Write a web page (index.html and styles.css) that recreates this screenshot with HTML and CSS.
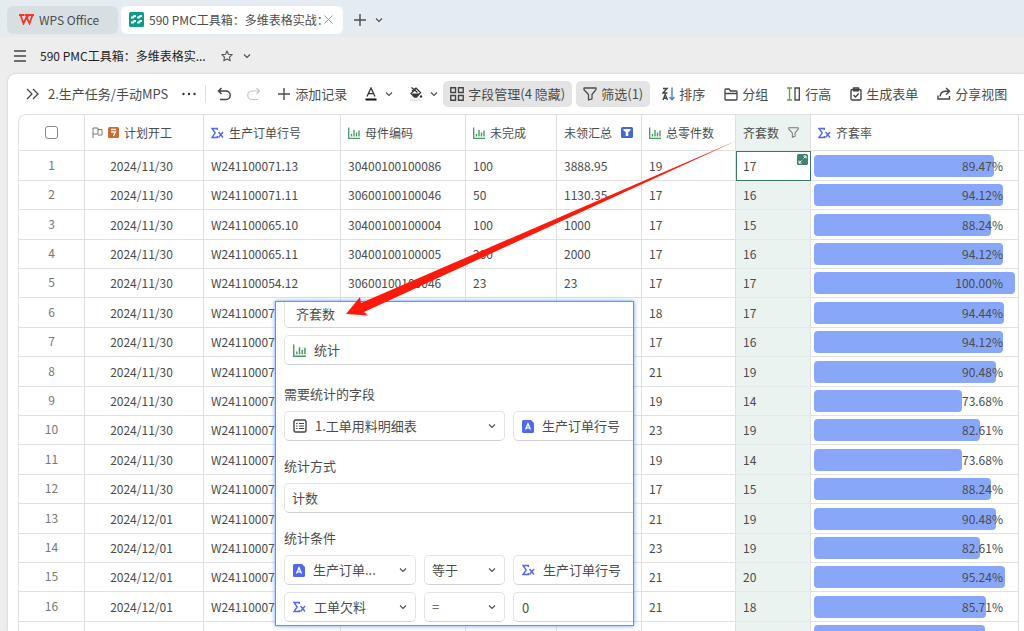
FILE: index.html
```html
<!DOCTYPE html>
<html lang="zh-CN">
<head>
    <meta charset="UTF-8">
    <meta name="viewport" content="width=device-width, initial-scale=1.0">
    <title>590 PMC工具箱：多维表格实战</title>
    <link rel="stylesheet" href="styles.css">
</head>
<body>
    <svg class="sprite" aria-hidden="true">
        <symbol id="i-down" viewBox="0 0 8 8"><path d="M1 2.5l3 3 3-3" fill="none" stroke="currentColor" stroke-width="1.1"/></symbol>
        <symbol id="i-chart" viewBox="0 0 12 12"><path d="M.7 .5v10.8H12" fill="none" stroke="#4b9866" stroke-width="1.3"/><path d="M3.500 7v2.500M6 3v6.500M8.500 5.500v4M11 3.500v6" fill="none" stroke="#4b9866" stroke-width="1.400"/></symbol>
        <symbol id="i-sigma" viewBox="0 0 13 12"><path d="M6.300 3V1.500H1L4.200 6 1 10.500h5.300V9M7.500 5l4.500 5.500M12 5L7.500 10.500" fill="none" stroke="#5268ee" stroke-width="1.400"/></symbol>
        <symbol id="i-text" viewBox="0 0 12 13"><path d="M2 0h7l3 3v8.500a1.500 1.500 0 0 1-1.500 1.500h-9A1.500 1.500 0 0 1 0 11.500v-10A1.500 1.500 0 0 1 1.500 0z" fill="#4f68ee"/><path d="M3.500 9.500L6 3.700l2.500 5.800M4.500 7.800h3" fill="none" stroke="#fff" stroke-width="1.300"/></symbol>
        <symbol id="i-funnel" viewBox="0 0 14 14"><path d="M1 1h12v1.700L9 7.500v4.300L5.500 13V7.500L1 2.700z" fill="none" stroke="currentColor" stroke-width="1.300" stroke-linejoin="round"/></symbol>
        <symbol id="i-plus" viewBox="0 0 14 14"><path d="M7 1v12M1 7h12" stroke="currentColor" stroke-width="1.400"/></symbol>
    </svg>

    <header class="tabs">
        <button class="tab home">
            <svg width="15" height="11" viewBox="0 0 15 11"><path d="M0 1h5.500M1.500 1l3 8.500L7.500 3l3 6.500 3-8.500M6 1h3.500L7.500 4.500M9.500 1H15" fill="none" stroke="#f0392b" stroke-width="1.800"/></svg>
            WPS Office
        </button>
        <button class="tab active">
            <svg width="15" height="15" viewBox="0 0 15 15"><rect width="15" height="15" rx="1.500" fill="#119b87"/><path d="M2 5.500h2l1.200-1.500H7M8 5.500h2L11.200 4H13M2 10.500h2L5.200 9H7M8 10.500h2L11.200 9H13" fill="none" stroke="#fff" stroke-width="1.900"/></svg>
            <span class="tab-name">590 PMC工具箱：多维表格实战：</span>
            <svg width="9" height="9" viewBox="0 0 9 9"><path d="M.5.5l8 8M8.500.5l-8 8" stroke="#999" stroke-width="1"/></svg>
        </button>
        <button class="icon-btn" aria-label="新建"><svg width="14" height="14"><use href="#i-plus"/></svg></button>
        <button class="icon-btn more" aria-label="更多"><svg width="8" height="8"><use href="#i-down"/></svg></button>
    </header>

    <div class="title-bar">
        <button class="icon-btn" aria-label="菜单"><svg width="12" height="12" viewBox="0 0 12 12"><path d="M0 1h12M0 6h12M0 11h12" stroke="#444" stroke-width="1.300"/></svg></button>
        <h1>590 PMC工具箱：多维表格实...</h1>
        <button class="icon-btn" aria-label="收藏"><svg width="12" height="12" viewBox="0 0 12 12"><path d="M6 .9l1.500 3.300 3.700.4-2.700 2.500.7 3.700L6 9l-3.200 1.800.7-3.700L.8 4.600l3.700-.4z" fill="none" stroke="#555" stroke-width="1.100" stroke-linejoin="round"/></svg></button>
        <button class="icon-btn" aria-label="展开"><svg width="8" height="8"><use href="#i-down"/></svg></button>
    </div>

    <main class="sheet">
        <div class="toolbar">
            <div class="view-name">
                <svg width="14" height="12" viewBox="0 0 14 12"><path d="M1 1l5 5-5 5M7 1l5 5-5 5" fill="none" stroke="#444" stroke-width="1.300"/></svg>
                <span>2.生产任务/手动MPS</span>
                <svg class="dots" width="14" height="4" viewBox="0 0 14 4"><circle cx="1.500" cy="2" r="1.200"/><circle cx="7" cy="2" r="1.200"/><circle cx="12.500" cy="2" r="1.200"/></svg>
            </div>
            <div class="tools">
                <button aria-label="撤销"><svg width="14" height="14" viewBox="0 0 14 14"><path d="M4.500 1L1.500 4l3 3M1.500 4H9a4 4 0 0 1 0 8.500H3" fill="none" stroke="#444" stroke-width="1.500"/></svg></button>
                <button aria-label="重做"><svg width="14" height="14" viewBox="0 0 14 14"><path d="M9.500 1l3 3-3 3M12.500 4H5a4 4 0 0 0 0 8.500h6" fill="none" stroke="#c4c4c4" stroke-width="1.200"/></svg></button>
                <button><svg width="14" height="14"><use href="#i-plus"/></svg>添加记录</button>
                <button class="font" aria-label="字体颜色"><svg width="12" height="14" viewBox="0 0 12 14"><path d="M2 9.500L6 1l4 8.500M3.400 6.700h5.200" fill="none" stroke="#333" stroke-width="1.300"/><path d="M.5 12.500h11" stroke="#111" stroke-width="2"/></svg><svg width="8" height="8"><use href="#i-down"/></svg></button>
                <button class="fill" aria-label="填充颜色"><svg width="14" height="14" viewBox="0 0 14 14"><path d="M2.500 .5l6 5M3 4l4-3 4.500 4.500-4 4.500H5.500L2 6.500l5-5" fill="none" stroke="#333" stroke-width="1.300"/><path d="M3 6.500h7.500L7 10H5.500z" fill="#333"/><circle cx="12" cy="9.500" r="1.200" fill="#333"/><path d="M1 13h11" stroke="#ddd" stroke-width="1.500"/></svg><svg width="8" height="8"><use href="#i-down"/></svg></button>
                <button class="on"><svg width="14" height="14" viewBox="0 0 14 14"><path d="M.8.800h4.700v4.700H.8zM8.500.800h4.700v4.700H8.500zM.8 8.500h4.700v4.700H.8zM8.500 8.500h4.700v4.700H8.500z" fill="none" stroke="#444" stroke-width="1.400"/></svg>字段管理(4 隐藏)</button>
                <button class="on"><svg width="14" height="14"><use href="#i-funnel"/></svg>筛选(1)</button>
                <button class="act"><svg width="13" height="14" viewBox="0 0 13 14"><path d="M1 1.500h4L1 6h4.500M1 13l2.200-5.500L5.500 13M1.800 11.300h3" fill="none" stroke="#444" stroke-width="1.400"/><path d="M10 .5v12M7.500 10l2.500 2.700 2.500-2.700" fill="none" stroke="#4e77e8" stroke-width="1.400"/></svg>排序</button>
                <button class="act"><svg width="14" height="13" viewBox="0 0 14 13"><path d="M1 11V1.800Q1 1 1.800 1H5l1.500 2h5.700q.8 0 .8.800V11q0 1-.8 1H1.800Q1 12 1 11zM1 5.500h12" fill="none" stroke="#444" stroke-width="1.300"/></svg>分组</button>
                <button class="act"><svg width="14" height="14" viewBox="0 0 14 14"><path d="M0 1h5M0 13h5M2.500 1v12" stroke="#5ba03c" stroke-width="1.300"/><path d="M8 1h4.300v12H8z" fill="none" stroke="#444" stroke-width="1.300"/></svg>行高</button>
                <button class="act"><svg width="12" height="14" viewBox="0 0 12 14"><rect x="1" y="2.500" width="10" height="10.500" rx="1.200" fill="none" stroke="#444" stroke-width="1.400"/><path d="M3.500 1h5v2.700h-5zM3.500 8l2 2 3.200-3.400" fill="none" stroke="#444" stroke-width="1.400"/></svg>生成表单</button>
                <button class="act"><svg width="14" height="14" viewBox="0 0 14 14"><path d="M9 1l3.500 3.200L9 7.500M12.500 4.200H8q-4.500.3-5 5.300M1 8.500V12h11.500V9" fill="none" stroke="#444" stroke-width="1.400"/></svg>分享视图</button>
            </div>
        </div>

        <div class="grid-wrap">
            <table class="grid">
                <colgroup>
                    <col class="c-no"><col class="c-date"><col class="c-order"><col class="c-code"><col class="c-todo">
                    <col class="c-sum"><col class="c-parts"><col class="c-kits"><col class="c-rate"><col>
                </colgroup>
                <thead>
                    <tr>
                        <th class="no"><input type="checkbox" aria-label="全选"></th>
                        <th><span class="head"><svg width="11" height="11" viewBox="0 0 11 11"><path d="M1 11V1h5v6H1M6 2.500h4v5.500H6" fill="none" stroke="#777"/></svg><svg width="11" height="11" viewBox="0 0 11 11"><rect width="11" height="11" rx="1.500" fill="#cc6a32"/><path d="M3 2.500h5M3 5h4.500L5.500 9" fill="none" stroke="#fff" stroke-width="1.300"/></svg>计划开工</span></th>
                        <th><span class="head"><svg width="13" height="12"><use href="#i-sigma"/></svg>生产订单行号</span></th>
                        <th><span class="head"><svg width="12" height="12"><use href="#i-chart"/></svg>母件编码</span></th>
                        <th><span class="head"><svg width="12" height="12"><use href="#i-chart"/></svg>未完成</span></th>
                        <th><span class="head wide">未领汇总<svg width="12" height="11" viewBox="0 0 12 11"><rect width="12" height="11" rx="1.500" fill="#4468cc"/><path d="M2.500 2h7v1.500L7.300 5v4H4.700V5L2.500 3.500z" fill="#fff"/></svg></span></th>
                        <th><span class="head"><svg width="12" height="12"><use href="#i-chart"/></svg>总零件数</span></th>
                        <th class="kits"><span class="head wide">齐套数<svg width="11" height="11"><use href="#i-funnel"/></svg></span></th>
                        <th><span class="head"><svg width="13" height="12"><use href="#i-sigma"/></svg>齐套率</span></th>
                        <th class="rest"></th>
                    </tr>
                </thead>
                <tbody id="rows"></tbody>
            </table>
        </div>
    </main>

    <section class="popup">
        <form class="fields">
            <input class="box name" type="text" value="齐套数" aria-label="字段名">
            <button type="button" class="box kind"><svg width="13" height="13"><use href="#i-chart"/></svg>统计</button>

            <h2>需要统计的字段</h2>
            <div class="line">
                <button type="button" class="box table-pick"><svg width="14" height="14" viewBox="0 0 14 14"><rect x="1" y="1" width="12" height="12" rx="1.500" fill="none" stroke="#444" stroke-width="1.400"/><path d="M3 4.500h1.500M6 4.500h5M3 7h1.500M6 7h5M3 9.500h1.500M6 9.500h5" stroke="#444" stroke-width="1.200"/></svg>1.工单用料明细表<svg class="arrow-down" width="8" height="8"><use href="#i-down"/></svg></button>
                <button type="button" class="box value"><svg width="12" height="13"><use href="#i-text"/></svg>生产订单行号</button>
            </div>

            <h2><label for="method">统计方式</label></h2>
            <select class="box method" id="method"><option>计数</option></select>

            <h2>统计条件</h2>
            <div class="line">
                <button type="button" class="box field"><svg width="12" height="13"><use href="#i-text"/></svg>生产订单...<svg class="arrow-down" width="8" height="8"><use href="#i-down"/></svg></button>
                <button type="button" class="box op">等于<svg class="arrow-down" width="8" height="8"><use href="#i-down"/></svg></button>
                <button type="button" class="box value"><svg width="13" height="12"><use href="#i-sigma"/></svg>生产订单行号</button>
            </div>
            <div class="line">
                <button type="button" class="box field"><svg width="13" height="12"><use href="#i-sigma"/></svg>工单欠料<svg class="arrow-down" width="8" height="8"><use href="#i-down"/></svg></button>
                <button type="button" class="box op">=<svg class="arrow-down" width="8" height="8"><use href="#i-down"/></svg></button>
                <input class="box value" type="text" value="0" aria-label="条件值">
            </div>
        </form>
    </section>

    <svg class="pointer" width="400" height="185" viewBox="340 140 400 185" aria-hidden="true">
        <path d="M738 140L361 303l-1-6-14 17 22 1.500-4-3.500z" fill="#fb1a0c"/>
    </svg>

    <script src="script.js"></script>
</body>
</html>
```
FILE: styles.css
```css
* {
    box-sizing: border-box;
}
body {
    margin: 0;
    height: 100vh;
    overflow: hidden;
    position: relative;
    display: flex;
    flex-direction: column;
    background: #ededed;
    color: #4c4c4c;
    font-family: "Noto Sans CJK SC", sans-serif;
    font-size: 12px;
    line-height: 18px;
}
button, input, select {
    font: inherit;
    color: inherit;
}
button {
    display: flex;
    align-items: center;
    padding: 0;
    border: none;
    background: none;
    white-space: nowrap;
    cursor: pointer;
}
svg {
    flex: none;
}
.sprite {
    position: absolute;
    width: 0;
    height: 0;
}

/* window tabs */
.tabs {
    flex: none;
    display: flex;
    align-items: center;
    height: 37px;
    padding: 2px 7px 0;
    background: #e4ecf2;
}
.tab {
    height: 28px;
    border-radius: 6px;
}
.tab.home {
    width: 111px;
    gap: 5px;
    padding-left: 12px;
    margin-right: 3px;
    background: #d8dfe3;
}
.tab.active {
    gap: 5px;
    padding: 0 10px 0 8px;
    background: #fff;
}
.tab-name {
    width: 170px;
    text-align: left;
}
.icon-btn {
    margin-left: 10px;
}
.icon-btn.more {
    margin-left: 8px;
}

/* document title */
.title-bar {
    flex: none;
    display: flex;
    align-items: center;
    height: 37px;
    padding-left: 4px;
}
.title-bar h1 {
    margin: 0 5px 0 14px;
    color: #222;
    font-size: 12px;
    font-weight: 400;
}

/* sheet */
.sheet {
    flex: 1;
    min-height: 0;
    margin-left: 8px;
    overflow: hidden;
    background: #fff;
    border-top-left-radius: 8px;
    box-shadow: 0 0 3px rgba(0, 0, 0, 0.15);
}
.toolbar {
    display: flex;
    align-items: center;
    height: 40px;
    padding-left: 18px;
    font-size: 13px;
    white-space: nowrap;
}
.view-name {
    display: flex;
    align-items: center;
    gap: 8px;
    height: 18px;
    padding-right: 9px;
    border-right: 1px solid #ddd;
}
.dots {
    margin-left: 6px;
    fill: #333;
}
.tools {
    display: flex;
    align-items: center;
    padding-left: 3px;
}
.tools button {
    height: 26px;
    gap: 4px;
    padding: 0 8px;
    border-radius: 5px;
}
.tools .on {
    margin-right: 4px;
    padding: 0 7px;
    background: #e4e4e4;
}
.tools .font {
    gap: 8px;
    padding-left: 10px;
}
.tools .fill {
    gap: 7px;
    padding-right: 5px;
}
.tools .act {
    margin-right: 3px;
}

/* table */
.grid-wrap {
    margin-left: 10px;
    border-left: 1px solid #e0e0e0;
    border-top: 1px solid #e0e0e0;
    border-top-left-radius: 8px;
}
.grid {
    width: 100%;
    table-layout: fixed;
    border-collapse: separate;
    border-spacing: 0;
}
.c-no { width: 66px; }
.c-date { width: 119px; }
.c-order { width: 137px; }
.c-code { width: 125px; }
.c-todo { width: 91px; }
.c-sum { width: 85px; }
.c-parts { width: 94px; }
.c-kits { width: 75px; }
.c-rate { width: 208px; }
th, td {
    padding: 0 7px;
    border-right: 1px solid #e0e0e0;
    border-bottom: 1px solid #e0e0e0;
    font-weight: 400;
    text-align: left;
    white-space: nowrap;
}
th {
    height: 36px;
}
td {
    height: 29px;
}
tbody tr:nth-child(5n+1) td,
tbody tr:nth-child(5n+3) td {
    height: 30px;
}
.rest {
    border-right: none;
}
td.rest {
    border-bottom: none;
}
.head {
    display: flex;
    align-items: center;
    gap: 5px;
}
.head.wide {
    gap: 9px;
}
.no {
    text-align: center;
    color: #777;
}
td.no {
    padding-bottom: 2px;
}
.no input {
    appearance: none;
    display: block;
    width: 13px;
    height: 13px;
    margin: 0 auto;
    border: 1px solid #888;
    border-radius: 3px;
    background: #fff;
}
.date {
    padding-right: 12px;
    text-align: center;
}
.kits {
    background: #eaf3f0;
    border-bottom-color: #e2ebe8;
}
.kits svg {
    color: #777;
}
.picked {
    position: relative;
    background: #fff;
    outline: 1px solid #39796a;
    outline-offset: -1px;
}
.expand {
    position: absolute;
    top: 3px;
    right: 2px;
}
.rate {
    padding: 0 3px;
}
.track {
    position: relative;
    height: 22px;
}
.bar {
    height: 22px;
    background: #88a7f9;
    border-radius: 4px;
}
.percent {
    position: absolute;
    top: 2px;
    right: 12px;
}

/* field settings */
.popup {
    position: absolute;
    left: 275px;
    top: 301px;
    width: 359px;
    height: 325px;
    overflow: hidden;
    background: #fff;
    border: 1px solid #5798f5;
    box-shadow: 0 0 4px #5b9dfb;
    font-size: 13px;
}
.fields {
    width: 420px;
    margin-top: -4px;
    padding-left: 8px;
}
.box {
    display: flex;
    align-items: center;
    gap: 8px;
    height: 30px;
    padding: 0 8px;
    border: 1px solid #e3e3e3;
    border-bottom-color: #d2d2d2;
    border-radius: 5px;
    background: #fff;
}
.name, .kind, .method {
    width: 100%;
}
.name {
    padding-left: 11px;
}
.kind {
    margin-top: 7px;
}
.method {
    appearance: none;
    padding: 0 7px;
}
.fields h2 {
    margin: 16px 0 8px;
    font-size: 13px;
    font-weight: 400;
    line-height: 18px;
}
.fields .kind + h2 {
    margin-top: 20px;
}
.line {
    display: flex;
    gap: 8px;
}
.line + .line {
    margin-top: 7px;
}
.table-pick {
    width: 221px;
}
.field {
    width: 132px;
}
.op {
    width: 81px;
    padding-left: 7px;
}
.value {
    width: 180px;
}
.arrow-down {
    margin-left: auto;
}

.pointer {
    position: absolute;
    left: 340px;
    top: 140px;
}
```
FILE: script.js
```js
const rows = [
    ["2024/11/30", "W241100071.13", "30400100100086", "100", "3888.95", 19, 17, 89.47],
    ["2024/11/30", "W241100071.11", "30600100100046", "50", "1130.35", 17, 16, 94.12],
    ["2024/11/30", "W241100065.10", "30400100100004", "100", "1000", 17, 15, 88.24],
    ["2024/11/30", "W241100065.11", "30400100100005", "200", "2000", 17, 16, 94.12],
    ["2024/11/30", "W241100054.12", "30600100100046", "23", "23", 17, 17, 100],
    ["2024/11/30", "W241100071", "", "", "", 18, 17, 94.44],
    ["2024/11/30", "W241100070", "", "", "", 17, 16, 94.12],
    ["2024/11/30", "W241100070", "", "", "", 21, 19, 90.48],
    ["2024/11/30", "W241100071", "", "", "", 19, 14, 73.68],
    ["2024/11/30", "W241100071", "", "", "", 23, 19, 82.61],
    ["2024/11/30", "W241100071", "", "", "", 19, 14, 73.68],
    ["2024/11/30", "W241100070", "", "", "", 17, 15, 88.24],
    ["2024/12/01", "W241100070", "", "", "", 21, 19, 90.48],
    ["2024/12/01", "W241100070", "", "", "", 23, 19, 82.61],
    ["2024/12/01", "W241100070", "", "", "", 21, 20, 95.24],
    ["2024/12/01", "W241100070", "", "", "", 21, 18, 85.71],
    ["", "", "", "", "", "", "", 85]
];

const expand = '<svg class="expand" width="11" height="11" viewBox="0 0 11 11"><rect width="11" height="11" rx="1.500" fill="#43806f"/><path d="M6.500 2H9v2.500M9 2L6.500 4.500M2 6.500V9h2.500M2 9l2.500-2.500" fill="none" stroke="#fff"/></svg>';

document.getElementById("rows").innerHTML = rows.map((r, i) => `
    <tr>
        <td class="no">${r[0] ? i + 1 : ""}</td>
        <td class="date">${r[0]}</td>
        <td>${r[1]}</td>
        <td>${r[2]}</td>
        <td>${r[3]}</td>
        <td>${r[4]}</td>
        <td>${r[5]}</td>
        <td class="kits${i === 0 ? " picked" : ""}">${r[6]}${i === 0 ? expand : ""}</td>
        <td class="rate"><div class="track"><div class="bar" style="width: ${r[7]}%"></div><span class="percent">${r[0] ? r[7].toFixed(2) + "%" : ""}</span></div></td>
        <td class="rest"></td>
    </tr>`).join("");
```
